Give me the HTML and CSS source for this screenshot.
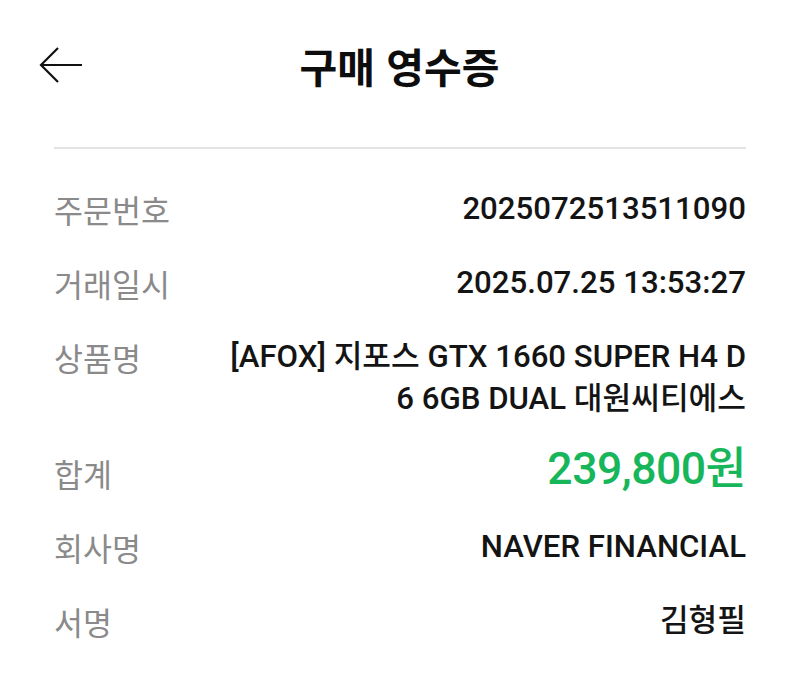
FILE: index.html
```html
<!DOCTYPE html>
<html lang="ko">
<head>
<meta charset="utf-8">
<title>구매 영수증</title>
<link rel="stylesheet" href="styles.css">
</head>
<body>
<div class="page">
  <header class="header">
    <div class="back">
      <svg width="44" height="38" viewBox="0 0 44 38" aria-hidden="true">
        <path d="M43 19 H2 M19 2 L2 19 L19 36" fill="none" stroke="#111" stroke-width="2.2" stroke-linecap="butt" stroke-linejoin="miter"/>
      </svg>
    </div>
    <h1 class="title">구매 영수증</h1>
    <div class="spacer"></div>
  </header>
  <div class="content">
    <hr class="divider">
    <div class="rows">
      <div class="row">
        <div class="label">주문번호</div>
        <div class="value">2025072513511090</div>
      </div>
      <div class="row">
        <div class="label">거래일시</div>
        <div class="value">2025.07.25 13:53:27</div>
      </div>
      <div class="row">
        <div class="label">상품명</div>
        <div class="value">[AFOX] 지포스 GTX 1660 SUPER H4 D<br>6 6GB DUAL 대원씨티에스</div>
      </div>
      <div class="row">
        <div class="label">합계</div>
        <div class="value total">239,800원</div>
      </div>
      <div class="row">
        <div class="label">회사명</div>
        <div class="value">NAVER FINANCIAL</div>
      </div>
      <div class="row">
        <div class="label">서명</div>
        <div class="value">김형필</div>
      </div>
    </div>
  </div>
</div>
</body>
</html>
```

FILE: styles.css
```css
* { box-sizing: border-box; }
html, body {
  margin: 0;
  padding: 0;
  background: #ffffff;
}
body {
  font-family: "Roboto", "Noto Sans CJK KR", sans-serif;
  color: #141414;
}
.page {
  width: 800px;
  height: 676px;
  overflow: hidden;
}
.header {
  height: 130px;
  padding: 0 40px 0 39px;
  display: grid;
  grid-template-columns: 1fr auto 1fr;
  align-items: center;
}
.back {
  display: flex;
  align-items: center;
  height: 38px;
}
.back svg { display: block; }
.title {
  margin: 0;
  font-family: "Noto Sans CJK KR", sans-serif;
  font-weight: 700;
  font-size: 41px;
  line-height: 46px;
  color: #0d0d0d;
  letter-spacing: 0;
}
.content {
  padding: 0 54px;
}
.divider {
  margin: 17px 0 0 0;
  border: 0;
  height: 2px;
  background: #e3e3e3;
}
.rows {
  padding-top: 39px;
  display: flex;
  flex-direction: column;
  gap: 32px;
}
.row {
  display: flex;
  justify-content: space-between;
  align-items: flex-start;
  line-height: 42px;
}
.label {
  font-family: "Noto Sans CJK KR", sans-serif;
  font-size: 31.5px;
  font-weight: 400;
  color: #8a8a8a;
  white-space: nowrap;
}
.value {
  font-size: 31.2px;
  font-weight: 500;
  text-align: right;
  color: #141414;
  letter-spacing: 0;
}
.value.total {
  font-size: 44.5px;
  color: #17b65a;
  letter-spacing: -0.5px;
  margin-top: -4px;
  margin-bottom: 4px;
}
```
